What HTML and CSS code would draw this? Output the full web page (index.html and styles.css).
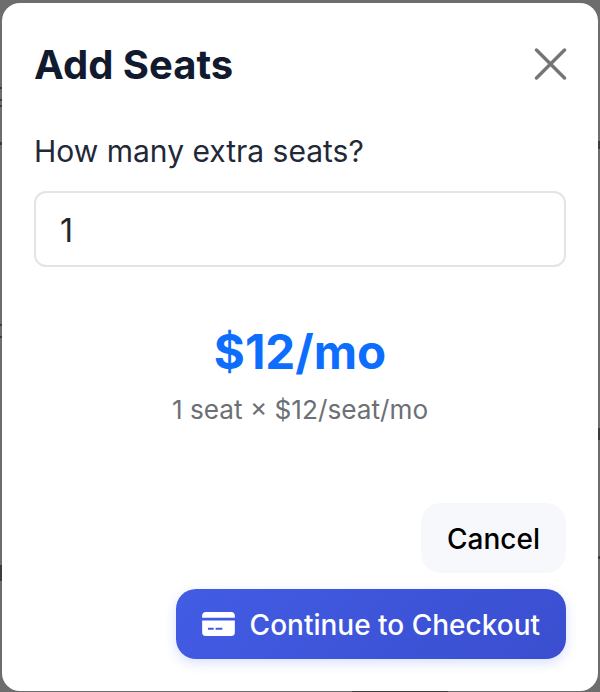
FILE: index.html
```html
<!DOCTYPE html>
<html lang="en">
<head>
<meta charset="utf-8">
<title>Add Seats</title>
<link rel="stylesheet" href="styles.css">
</head>
<body>
<div class="overlay">
  <div class="modal">
    <div class="header">
      <h2 class="title">Add Seats</h2>
      <button class="close" aria-label="Close">
        <svg width="34" height="32" viewBox="0 0 34 32" fill="none" stroke="#757575" stroke-width="3.4" stroke-linecap="round"><path d="M3.500 2 L31.500 30 M31.500 2 L3.500 30"/></svg>
      </button>
    </div>
    <label class="label">How many extra seats?</label>
    <div class="input">1</div>
    <div class="summary">
      <div class="price">$12/mo</div>
      <div class="detail">1 seat × $12/seat/mo</div>
    </div>
    <div class="actions">
      <button class="btn cancel">Cancel</button>
      <button class="btn checkout">
        <svg width="33" height="25" viewBox="0 0 34 26" fill="#fff"><path d="M0 5a4 4 0 0 1 4-4h26a4 4 0 0 1 4 4v2H0z"/><path fill-rule="evenodd" d="M0 10h34v12a4 4 0 0 1-4 4H4a4 4 0 0 1-4-4zM6 17.500v2h6v-2zM14 17.500v2h7v-2z"/></svg>
        <span>Continue to Checkout</span>
      </button>
    </div>
  </div>
</div>
</body>
</html>
```
FILE: styles.css
```css
* { box-sizing: border-box; }
html, body { margin: 0; height: 100%; }
body { font-family: Inter, "Liberation Sans", sans-serif; background: #6d6d6d; }
.overlay {
  width: 600px; height: 692px; padding: 3px 2px 1px;
  background:
    linear-gradient(#3c3c3c, #3c3c3c) 0 87px / 2px 2px no-repeat,
    linear-gradient(#3c3c3c, #3c3c3c) 0 99px / 2px 2px no-repeat,
    linear-gradient(#3c3c3c, #3c3c3c) 0 105px / 2px 2px no-repeat,
    linear-gradient(#3c3c3c, #3c3c3c) 0 142px / 2px 3px no-repeat,
    linear-gradient(#3c3c3c, #3c3c3c) 0 324px / 2px 2px no-repeat,
    linear-gradient(#3c3c3c, #3c3c3c) 0 336px / 2px 2px no-repeat,
    linear-gradient(#3c3c3c, #3c3c3c) 0 565px / 2px 16px no-repeat,
    linear-gradient(#3c3c3c, #3c3c3c) 598px 141px / 2px 8px no-repeat,
    linear-gradient(#3c3c3c, #3c3c3c) 598px 428px / 2px 12px no-repeat,
    linear-gradient(#3c3c3c, #3c3c3c) 598px 556px / 2px 3px no-repeat,
    linear-gradient(#3c3c3c, #3c3c3c) 352px 691px / 96px 1px no-repeat;
}
.modal { height: 688px; background: #fff; border-radius: 18px; padding: 32px; display: flex; flex-direction: column; }
.header { display: flex; justify-content: space-between; align-items: center; height: 60px; }
.title { margin: 0; font-size: 40px; line-height: 60px; font-weight: 700; color: #111a2e; }
.close { border: 0; background: none; padding: 0; display: flex; margin-right: -1px; transform: translateY(-1px); }
.label { margin-top: 36px; font-size: 30px; line-height: 40px; color: #1f2937; }
.input { margin-top: 20px; height: 76px; border: 2px solid #e2e4e8; border-radius: 12px; padding: 2px 24px 0; font-size: 32px; line-height: 72px; color: #212529; }
.summary { margin-top: 55px; text-align: center; }
.price { font-size: 47.5px; line-height: 60px; font-weight: 700; color: #0d6efd; }
.detail { margin-top: 10px; font-size: 26.2px; line-height: 36px; color: #6c7075; }
.actions { margin-top: auto; display: flex; flex-direction: column; align-items: flex-end; gap: 16px; }
.btn { border: 0; font-family: inherit; font-size: 28px; font-weight: 500; border-radius: 20px; height: 70px; padding-top: 2px; display: flex; align-items: center; }
.cancel { background: #f6f8fb; color: #000; padding-left: 26px; padding-right: 26px; }
.checkout { background: linear-gradient(135deg, #425ce4, #3a4ecf); color: #fff; padding-left: 26px; padding-right: 26px; gap: 15px; box-shadow: 0 4px 12px rgba(67,97,238,.2); }
.checkout svg { transform: translateY(-1px); }
```
